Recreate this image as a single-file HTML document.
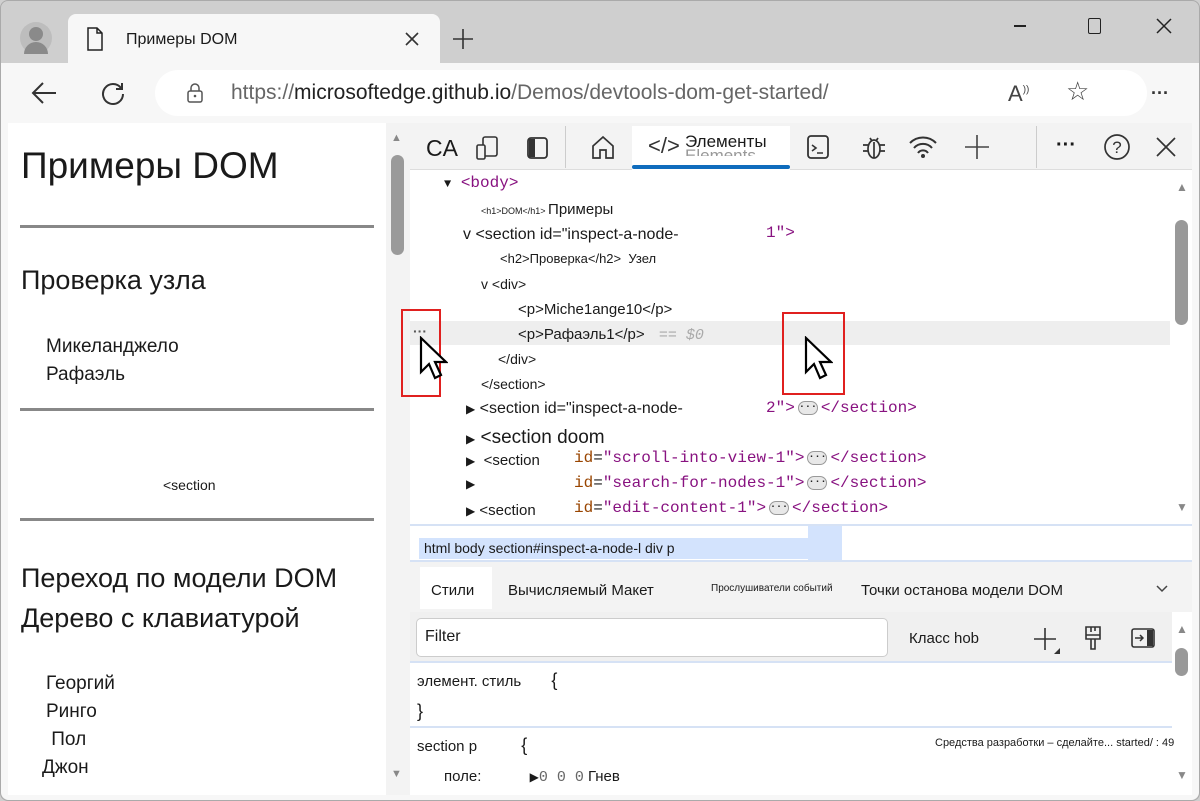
<!DOCTYPE html>
<html><head><meta charset="utf-8"><style>
*{margin:0;padding:0;box-sizing:border-box}
body{width:1200px;height:801px;overflow:hidden;background:#cfcfcf;font-family:"Liberation Sans",sans-serif;position:relative;color:#1a1a1a}
.a{position:absolute;white-space:nowrap}
.m{font-family:"Liberation Mono",monospace}
.tag{color:#881280}.at{color:#994500}.av{color:#1a1aa6}
.pill{display:inline-block;width:20px;height:14px;border:1px solid #999;border-radius:7px;background:#e8e8e8;font-size:10px;line-height:11px;text-align:center;vertical-align:middle;color:#222;font-weight:bold;margin:0 3px}
svg{position:absolute}
</style></head><body>
<div class="a" style="left:0;top:0;width:1200px;height:801px;border:1px solid #aaa;border-radius:8px;background:#cfcfcf"></div>
<div class="a" style="left:20px;top:22px;width:32px;height:32px;border-radius:50%;background:#bdbdbd"></div>
<div class="a" style="left:29px;top:27px;width:14px;height:14px;border-radius:50%;background:#8a8a8a"></div>
<div class="a" style="left:24px;top:42px;width:24px;height:12px;border-radius:12px 12px 0 0;background:#8a8a8a"></div>
<div class="a" style="left:68px;top:14px;width:372px;height:50px;background:#f7f7f7;border-radius:8px 8px 0 0"></div>
<svg style="left:86px;top:27px" width="18" height="24" viewBox="0 0 18 24"><path d="M2 1h9l5 5v17H2z M11 1v5h5" fill="none" stroke="#222" stroke-width="1.5"/></svg>
<div class="a" style="left:126px;top:31px;font-size:16px">Примеры DOM</div>
<svg style="left:404px;top:31px" width="16" height="16" viewBox="0 0 16 16"><path d="M2 2l12 12M14 2L2 14" stroke="#333" stroke-width="1.6"/></svg>
<svg style="left:452px;top:28px" width="22" height="22" viewBox="0 0 22 22"><path d="M11 1v20M1 11h20" stroke="#333" stroke-width="1.6"/></svg>
<div class="a" style="left:1014px;top:25px;width:12px;height:1.5px;background:#222"></div>
<div class="a" style="left:1088px;top:18px;width:13px;height:16px;border:1.5px solid #222;border-radius:2px"></div>
<svg style="left:1156px;top:18px" width="16" height="16" viewBox="0 0 16 16"><path d="M1 1l14 14M15 1L1 15" stroke="#222" stroke-width="1.5"/></svg>
<div class="a" style="left:1px;top:63px;width:1198px;height:737px;background:#f7f7f7;border-radius:0 0 8px 8px"></div>
<svg style="left:30px;top:80px" width="28" height="26" viewBox="0 0 28 26"><path d="M26 13H3M13 3L3 13l10 10" fill="none" stroke="#333" stroke-width="2"/></svg>
<svg style="left:100px;top:80px" width="26" height="26" viewBox="0 0 26 26"><path d="M21 8A10 10 0 1 0 23 14" fill="none" stroke="#333" stroke-width="2"/><path d="M22 3v6h-6" fill="none" stroke="#333" stroke-width="2"/></svg>
<div class="a" style="left:155px;top:70px;width:992px;height:46px;background:#fff;border-radius:23px"></div>
<svg style="left:186px;top:82px" width="18" height="22" viewBox="0 0 18 22"><rect x="2" y="9" width="14" height="11" rx="2" fill="none" stroke="#555" stroke-width="1.5"/><path d="M5 9V6a4 4 0 0 1 8 0v3" fill="none" stroke="#555" stroke-width="1.5"/><circle cx="9" cy="14" r="1.3" fill="#555"/></svg>
<div class="a" style="left:231px;top:81px;font-size:21px;color:#666">https://<span style="color:#222">microsoftedge.github.io</span>/Demos/devtools-dom-get-started/</div>
<div class="a" style="left:1008px;top:81px;font-size:22px;color:#444">A<sup style="font-size:10px">))</sup></div>
<div class="a" style="left:1066px;top:76px;font-size:26px;color:#444">☆</div>
<div class="a" style="left:1151px;top:83px;font-size:18px;color:#333;font-weight:bold">···</div>
<div class="a" style="left:8px;top:123px;width:378px;height:672px;background:#fff"></div>
<div class="a" style="left:21px;top:145px;font-size:37px">Примеры DOM</div>
<div class="a" style="left:20px;top:225px;width:354px;height:3px;background:#888"></div>
<div class="a" style="left:21px;top:265px;font-size:27px">Проверка узла</div>
<div class="a" style="left:46px;top:333px;font-size:19px;line-height:28px">Микеланджело<br>Рафаэль</div>
<div class="a" style="left:20px;top:408px;width:354px;height:3px;background:#888"></div>
<div class="a" style="left:163px;top:477px;font-size:14px">&lt;section</div>
<div class="a" style="left:20px;top:518px;width:354px;height:3px;background:#888"></div>
<div class="a" style="left:21px;top:558px;font-size:27px;line-height:40px">Переход по модели DOM<br>Дерево с клавиатурой</div>
<div class="a" style="left:46px;top:670px;font-size:19px;line-height:28px">Георгий<br>Ринго<br>&nbsp;Пол<br><span style="margin-left:-4px">Джон</span></div>
<div class="a" style="left:386px;top:123px;width:24px;height:672px;background:#f3f3f3"></div>
<div class="a" style="left:391px;top:155px;width:13px;height:100px;background:#9a9a9a;border-radius:7px"></div>
<div class="a" style="left:391px;top:132px;font-size:11px;color:#888">▲</div>
<div class="a" style="left:391px;top:768px;font-size:11px;color:#888">▼</div>
<div class="a" style="left:410px;top:123px;width:782px;height:672px;background:#fff"></div>
<div class="a" style="left:410px;top:123px;width:782px;height:47px;background:#f3f3f3;border-bottom:1px solid #ddd"></div>
<div class="a" style="left:426px;top:135px;font-size:23px">CA</div>
<svg style="left:474px;top:135px" width="26" height="26" viewBox="0 0 26 26"><rect x="9" y="2" width="14" height="19" rx="2" fill="none" stroke="#333" stroke-width="1.6"/><rect x="3" y="10" width="8" height="14" rx="1.5" fill="#f3f3f3" stroke="#333" stroke-width="1.6"/></svg>
<svg style="left:526px;top:136px" width="24" height="24" viewBox="0 0 24 24"><rect x="2" y="2" width="19" height="20" rx="3" fill="none" stroke="#333" stroke-width="1.8"/><rect x="3" y="3" width="6" height="18" fill="#333"/></svg>
<div class="a" style="left:565px;top:126px;width:1px;height:42px;background:#ccc"></div>
<svg style="left:590px;top:134px" width="26" height="26" viewBox="0 0 26 26"><path d="M3 12L13 3l10 9v12h-7v-8h-6v8H3z" fill="none" stroke="#333" stroke-width="1.7"/></svg>
<div class="a" style="left:632px;top:126px;width:158px;height:44px;background:#fff"></div>
<div class="a" style="left:632px;top:165px;width:158px;height:4px;background:#0f6cbd;border-radius:2px"></div>
<div class="a" style="left:648px;top:133px;font-size:22px;color:#333">&lt;/&gt;</div>
<div class="a" style="left:685px;top:146px;font-size:17px;color:#999;height:10px;overflow:hidden">Elements</div>
<div class="a" style="left:685px;top:132px;font-size:17px">Элементы</div>
<svg style="left:806px;top:134px" width="24" height="26" viewBox="0 0 24 26"><rect x="2" y="2" width="20" height="22" rx="3" fill="none" stroke="#333" stroke-width="1.8"/><path d="M6 11l4 3-4 3M11 19h6" fill="none" stroke="#333" stroke-width="1.6"/></svg>
<svg style="left:860px;top:133px" width="28" height="28" viewBox="0 0 28 28"><ellipse cx="14" cy="16" rx="6" ry="9" fill="none" stroke="#333" stroke-width="1.7"/><path d="M8 12H3M8 18H3M20 12h5M20 18h5M10 5l2 3M18 5l-2 3M14 9v16" stroke="#333" stroke-width="1.7" fill="none"/></svg>
<svg style="left:908px;top:134px" width="30" height="26" viewBox="0 0 30 26"><path d="M2 9a18 18 0 0 1 26 0M6 14a12 12 0 0 1 18 0M10 19a6 6 0 0 1 10 0" fill="none" stroke="#333" stroke-width="2"/><circle cx="15" cy="22" r="2" fill="#333"/></svg>
<svg style="left:964px;top:134px" width="26" height="26" viewBox="0 0 26 26"><path d="M13 1v24M1 13h24" stroke="#444" stroke-width="1.6"/></svg>
<div class="a" style="left:1036px;top:126px;width:1px;height:42px;background:#ccc"></div>
<div class="a" style="left:1056px;top:134px;font-size:20px;font-weight:bold">···</div>
<svg style="left:1103px;top:133px" width="28" height="28" viewBox="0 0 28 28"><circle cx="14" cy="14" r="12" fill="none" stroke="#333" stroke-width="1.7"/><text x="14" y="20" font-size="17" text-anchor="middle" font-family="Liberation Sans" fill="#333">?</text></svg>
<svg style="left:1156px;top:137px" width="20" height="20" viewBox="0 0 20 20"><path d="M1 1l18 18M19 1L1 19" stroke="#333" stroke-width="1.7"/></svg>
<div class="a" style="left:410px;top:321px;width:760px;height:24px;background:#eee"></div>
<div class="a m" style="left:444px;top:174px;font-size:16px"><span style="font-size:12px">▼</span> <span class="tag">&lt;body&gt;</span></div>
<div class="a" style="left:481px;top:201px;font-size:9px">&lt;h1&gt;DOM&lt;/h1&gt; <span style="font-size:15px">Примеры</span></div>
<div class="a" style="left:463px;top:226px;font-size:16px">v &lt;section id="inspect-a-node-</div>
<div class="a m" style="left:766px;top:224px;font-size:16px"><span class="tag">1"&gt;</span></div>
<div class="a" style="left:500px;top:251px;font-size:13px">&lt;h2&gt;Проверка&lt;/h2&gt; &nbsp;Узел</div>
<div class="a" style="left:481px;top:276px;font-size:14px">v &lt;div&gt;</div>
<div class="a" style="left:518px;top:301px;font-size:15px">&lt;p&gt;Miche1ange10&lt;/p&gt;</div>
<div class="a" style="left:518px;top:326px;font-size:15px">&lt;p&gt;Рафаэль1&lt;/p&gt; <span class="m" style="color:#aaa;font-style:italic;margin-left:10px">== $0</span></div>
<div class="a" style="left:413px;top:323px;font-size:14px;font-weight:bold;color:#555">···</div>
<div class="a" style="left:498px;top:351px;font-size:14px">&lt;/div&gt;</div>
<div class="a" style="left:481px;top:376px;font-size:14px">&lt;/section&gt;</div>
<div class="a" style="left:466px;top:400px;font-size:16px"><span style="font-size:12px">▶</span> &lt;section id="inspect-a-node-</div>
<div class="a m" style="left:766px;top:399px;font-size:16px"><span class="tag">2"&gt;</span><span class="pill">···</span><span class="tag">&lt;/section&gt;</span></div>
<div class="a" style="left:466px;top:427px;font-size:19px"><span style="font-size:12px">▶</span> &lt;section doom</div>
<div class="a" style="left:466px;top:452px;font-size:15px"><span style="font-size:12px">▶</span> &nbsp;&lt;section</div>
<div class="a m" style="left:574px;top:449px;font-size:16px"><span class="at">id</span>=<span class="tag">"scroll-into-view-1"&gt;</span><span class="pill">···</span><span class="tag">&lt;/section&gt;</span></div>
<div class="a" style="left:466px;top:477px;font-size:12px">▶</div>
<div class="a m" style="left:574px;top:474px;font-size:16px"><span class="at">id</span>=<span class="tag">"search-for-nodes-1"&gt;</span><span class="pill">···</span><span class="tag">&lt;/section&gt;</span></div>
<div class="a" style="left:466px;top:502px;font-size:15px"><span style="font-size:12px">▶</span> &lt;section</div>
<div class="a m" style="left:574px;top:499px;font-size:16px"><span class="at">id</span>=<span class="tag">"edit-content-1"&gt;</span><span class="pill">···</span><span class="tag">&lt;/section&gt;</span></div>
<div class="a" style="left:1176px;top:180px;font-size:12px;color:#888">▲</div>
<div class="a" style="left:1175px;top:220px;width:13px;height:105px;background:#999;border-radius:7px"></div>
<div class="a" style="left:1176px;top:500px;font-size:12px;color:#888">▼</div>
<div class="a" style="left:401px;top:309px;width:40px;height:88px;border:2px solid #e0201f"></div>
<div class="a" style="left:782px;top:312px;width:63px;height:83px;border:2px solid #e0201f"></div>
<svg style="left:418px;top:336px" width="30" height="46" viewBox="0 0 30 46"><path d="M3 2v34l8-8 6 14 6-3-6-13h11z" fill="#fff" stroke="#000" stroke-width="2.2"/></svg>
<svg style="left:803px;top:336px" width="30" height="46" viewBox="0 0 30 46"><path d="M3 2v34l8-8 6 14 6-3-6-13h11z" fill="#fff" stroke="#000" stroke-width="2.2"/></svg>
<div class="a" style="left:410px;top:524px;width:782px;height:2px;background:#d6e2f5"></div>
<div class="a" style="left:410px;top:560px;width:782px;height:2px;background:#d6e2f5"></div>
<div class="a" style="left:419px;top:538px;width:390px;height:21px;background:#d3e3fd"></div>
<div class="a" style="left:808px;top:526px;width:34px;height:34px;background:#d3e3fd"></div>
<div class="a" style="left:424px;top:540px;font-size:14px">html body section#inspect-a-node-l div p</div>
<div class="a" style="left:410px;top:562px;width:782px;height:50px;background:#f3f3f3"></div>
<div class="a" style="left:420px;top:567px;width:72px;height:42px;background:#fff"></div>
<div class="a" style="left:431px;top:582px;font-size:15px">Стили</div>
<div class="a" style="left:508px;top:582px;font-size:15px">Вычисляемый Макет</div>
<div class="a" style="left:711px;top:583px;font-size:10px">Прослушиватели событий</div>
<div class="a" style="left:861px;top:582px;font-size:15px">Точки останова модели DOM</div>
<svg style="left:1155px;top:584px" width="14" height="10" viewBox="0 0 14 10"><path d="M2 2l5 5 5-5" fill="none" stroke="#444" stroke-width="1.5"/></svg>
<div class="a" style="left:410px;top:612px;width:762px;height:51px;background:#f0f0f0;border-bottom:2px solid #d6e2f5"></div>
<div class="a" style="left:416px;top:618px;width:472px;height:39px;background:#fff;border:1.5px solid #ccc;border-radius:5px"></div>
<div class="a" style="left:425px;top:628px;font-size:16px">Filter</div>
<div class="a" style="left:909px;top:630px;font-size:15px">Класс hob</div>
<svg style="left:1033px;top:627px" width="28" height="28" viewBox="0 0 28 28"><path d="M12 1v22M1 12h22" stroke="#333" stroke-width="1.6"/><path d="M27 21v6h-6z" fill="#333"/></svg>
<svg style="left:1083px;top:625px" width="20" height="28" viewBox="0 0 20 28"><path d="M3 2h14v12H3zM3 10h14M8 2v5M12 2v4M8 14v10h4V14" fill="none" stroke="#333" stroke-width="1.6"/></svg>
<svg style="left:1130px;top:627px" width="26" height="22" viewBox="0 0 26 22"><rect x="2" y="2" width="22" height="18" rx="2" fill="none" stroke="#333" stroke-width="1.6"/><rect x="17" y="3" width="6" height="16" fill="#333"/><path d="M5 11h8M10 8l3 3-3 3" fill="none" stroke="#333" stroke-width="1.5"/></svg>
<div class="a" style="left:417px;top:670px;font-size:15px">элемент. стиль <span style="margin-left:26px;font-size:18px">{</span></div>
<div class="a" style="left:417px;top:701px;font-size:18px">}</div>
<div class="a" style="left:410px;top:726px;width:762px;height:2px;background:#d6e2f5"></div>
<div class="a" style="left:417px;top:735px;font-size:15px">section p <span style="margin-left:40px;font-size:18px">{</span></div>
<div class="a" style="left:935px;top:737px;font-size:11px">Средства разработки – сделайте... started/ : 49</div>
<div class="a" style="left:444px;top:768px;font-size:15px">поле: <span style="margin-left:44px;font-size:12px">▶</span><span class="m" style="color:#666">0 0 0</span> Гнев</div>
<div class="a" style="left:1176px;top:622px;font-size:12px;color:#888">▲</div>
<div class="a" style="left:1175px;top:648px;width:13px;height:28px;background:#999;border-radius:7px"></div>
<div class="a" style="left:1176px;top:768px;font-size:12px;color:#888">▼</div>
</body></html>
